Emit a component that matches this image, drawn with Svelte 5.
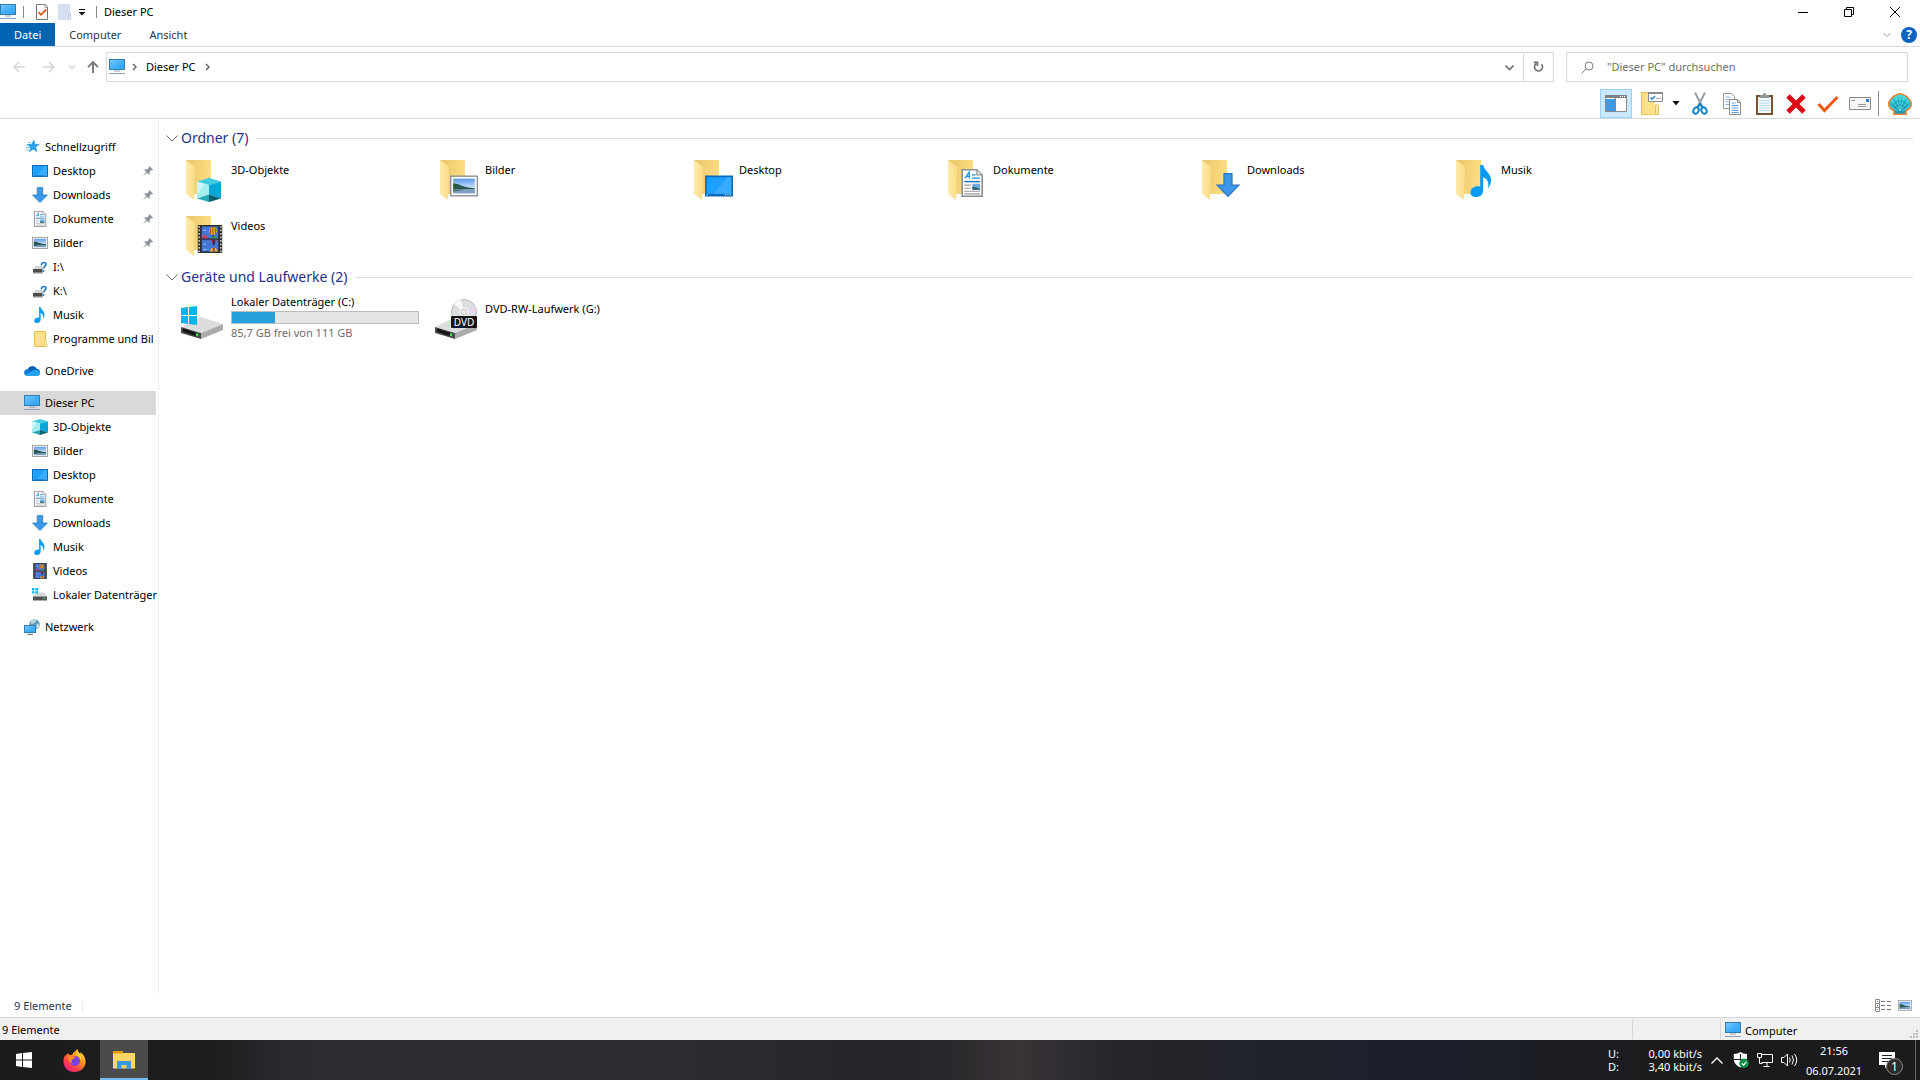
<script lang="ts">
	type Entry = { label: string; icon: string; level: number; pinned?: boolean; gap?: boolean };

	const tree: Entry[] = [
		{ label: 'Schnellzugriff', icon: 'star', level: 0 },
		{ label: 'Desktop', icon: 'desktop', level: 1, pinned: true },
		{ label: 'Downloads', icon: 'download', level: 1, pinned: true },
		{ label: 'Dokumente', icon: 'document', level: 1, pinned: true },
		{ label: 'Bilder', icon: 'picture', level: 1, pinned: true },
		{ label: 'I:\\', icon: 'unknown', level: 1 },
		{ label: 'K:\\', icon: 'unknown', level: 1 },
		{ label: 'Musik', icon: 'music', level: 1 },
		{ label: 'Programme und Bil', icon: 'folder', level: 1 },
		{ label: 'OneDrive', icon: 'cloud', level: 0, gap: true },
		{ label: 'Dieser PC', icon: 'pc', level: 0, gap: true },
		{ label: '3D-Objekte', icon: 'cube', level: 1 },
		{ label: 'Bilder', icon: 'picture', level: 1 },
		{ label: 'Desktop', icon: 'desktop', level: 1 },
		{ label: 'Dokumente', icon: 'document', level: 1 },
		{ label: 'Downloads', icon: 'download', level: 1 },
		{ label: 'Musik', icon: 'music', level: 1 },
		{ label: 'Videos', icon: 'video', level: 1 },
		{ label: 'Lokaler Datenträger', icon: 'drive', level: 1 },
		{ label: 'Netzwerk', icon: 'network', level: 0, gap: true }
	];

	// place = position and scale of the glyph in front of the folder
	const folders = [
		{ label: '3D-Objekte', icon: 'cube', place: 'translate(18 25) scale(1.5)' },
		{ label: 'Bilder', icon: 'picture', place: 'translate(17 19) scale(1.75)' },
		{ label: 'Desktop', icon: 'desktop', place: 'translate(18 19) scale(1.75)' },
		{ label: 'Dokumente', icon: 'document', place: 'translate(17 16) scale(1.75)' },
		{ label: 'Downloads', icon: 'download', place: 'translate(21 20) scale(1.5)' },
		{ label: 'Musik', icon: 'music', place: 'translate(17 12) scale(2)' },
		{ label: 'Videos', icon: 'video', place: 'translate(17 16) scale(1.75)' }
	];

	const usedPercent = 23;

	let selected = $state(10);
	let search = $state('');
	let foldersOpen = $state(true);
	let drivesOpen = $state(true);
</script>

{#snippet glyph(name: string)}
	{#if name === 'pc'}
		<rect x="0.5" y="0.5" width="15" height="10" fill="url(#screen)" stroke="#2f7fae" />
		<path d="M5 12h6" stroke="#8ea3b0" />
		<path d="M0 14.5h16" stroke="#8b9fb8" />
	{:else if name === 'desktop'}
		<rect x="0.5" y="2.5" width="15" height="11" fill="#1e9ffc" stroke="#0d6cb5" />
		<path d="M5 12.5 13 3h2v9.5z" fill="#38acff" />
		<path d="M1 13h14" stroke="#0d6cb5" />
		<path d="M1 13h.6M11.4 13h.6M12.8 13h.6M14.2 13h.6" stroke="#fff" stroke-width="0.6" />
	{:else if name === 'download'}
		<path d="M5.3 0.4h5.4v7.6h4.7L8 15.6 0.6 8h4.7z" fill="#3b97e8" stroke="#2471b9" stroke-width="0.7" />
	{:else if name === 'document'}
		<path d="M2.4 0.4h8.4l3 3v12.2H2.4z" fill="#fff" stroke="#8a8f93" stroke-width="0.9" />
		<path d="M10.8 0.4v3h3" fill="#e6e9eb" stroke="#8a8f93" stroke-width="0.7" />
		<path d="m4 5.4 2.4-3.6.2 3.6M5 4.2h1.6M8 3.4h2M8 5.2h4.4" fill="none" stroke="#1a8fd6" stroke-width="0.7" />
		<path d="M3.6 7.2h9" stroke="#1a6fb0" stroke-width="0.8" />
		<path d="M3.6 9.2h3.8M3.6 11h3.8M3.6 12.7h9M3.6 14.2h9" stroke="#9b9b9b" stroke-width="0.6" />
		<rect x="8.2" y="8.4" width="4.4" height="3.4" fill="#6ea8de" />
		<path d="M8.2 10.2q2 .2 4.4 1.2v.4H8.2z" fill="#295f62" />
	{:else if name === 'picture'}
		<rect x="0.4" y="2.4" width="15.2" height="11.2" fill="#fff" stroke="#8c9196" stroke-width="0.8" />
		<rect x="1.8" y="3.8" width="12.4" height="8.4" fill="url(#sky)" />
		<path d="M1.8 6.4q3 .2 5.6 1.7 3 .7 6.8 1.2v.7H1.8z" fill="#28594f" />
		<path d="M1.8 10h12.4v2.2H1.8z" fill="#7f9fc0" />
		<path d="M1.8 10h7l-7 1.3z" fill="#44727a" />
	{:else if name === 'music'}
		<path
			d="M7.1 0h1.5c.4 2.8 3.9 4 3.9 7.5 0 1.6-.6 3.2-1.5 4.2.7-3.2-.4-4.8-2.4-5.6v6.6c0 1.9-1.4 3.3-3.5 3.3C3.4 16 2.2 15.1 2.2 13.7c0-1.800 1.900-3.200 4-3.100.3 0 .6 0 .9.1z"
			fill="#069cf6"
		/>
	{:else if name === 'video'}
		<path d="M1 0h14v16H1z" fill="#2e2e30" />
		<path d="M1.8.6v15M14.200.6v15" stroke="#dcdcdc" stroke-width="0.800" stroke-dasharray="1 1" />
		<path d="M3.300.8h9.400v6.800H3.300zM3.300 8.400h9.400v6.800H3.300z" fill="#4476d6" />
		<path d="M3.300 6.600l1.600-1 2 1.100v.9H3.300z" fill="#c8406a" />
		<path d="M8 7.600 10.600 6l2.100 1.600z" fill="#2fa35a" />
		<ellipse cx="9.700" cy="3.400" rx="2.200" ry="2.200" fill="#e8ab22" />
		<path d="M9.700 1.200v4.400M8.300 2v3M11.100 2v3" stroke="#8d3a22" stroke-width="0.500" />
		<path d="M9.300 6h.9v.8h-.9z" fill="#3a2a20" />
		<path d="M8.200 8.400h4l-1.400 2.500h-1.200z" fill="#c93434" />
		<path d="M9.500 8.400h1.200v3H9.500z" fill="#2b2a60" />
		<path d="M8 15.200q.1-2.200 2.100-2.200t2.300 2.200z" fill="#ecb824" />
		<path d="M9.600 13.100h1.100v2.100H9.600z" fill="#a83c2a" />
		<path d="M4.200 3h1.600M4.200 11h1.500M4.200 14h2" stroke="#9ec0fb" stroke-width="0.600" />
	{:else if name === 'cube'}
		<path d="M8 0 16 2.400 8 4.600 0 2.400z" fill="#3ccbe0" />
		<path d="M0 2.400 8 4.600V11L0 13.600z" fill="#a6edf0" />
		<path d="M16 2.400 8 4.600V11l8 2.600z" fill="#0aa6d8" />
		<path d="M0 13.600 8 11v5z" fill="#25a9b6" />
		<path d="M16 13.600 8 11v5z" fill="#05606f" />
		<path d="M0 2.400 5 3.800 0 11z" fill="#cdf7f6" />
	{:else if name === 'star'}
		<path d="m9.800 1.200 1.200 4 4.200.2-3.600 2.600 1.200 4.600-3.700-2.500-3.600 2.600L6.700 8.300 3.400 5.600l4.400-.3z" fill="#2aa5ee" stroke="#1886cc" stroke-width="0.600" />
		<path d="M4 3.600h2.700M2.100 6h3M2.300 8.500h3.300M2 11h2.800" stroke="#64bdf0" />
	{:else if name === 'unknown'}
		<path d="m1.500 10 2-3h7l1 3z" fill="#d2d4d6" />
		<path d="M1 10h9.500v3.700H1z" fill="#4a4d50" />
		<path d="M1 14h9.500" stroke="#929292" />
		<path d="M9.400 6.200c0-3.600 4.900-3.400 4.600-.7-.3 1.900-2.500 1.900-2.500 4.100M11.500 11.200v1.800" fill="none" stroke="#2878bc" stroke-width="1.700" />
	{:else if name === 'folder'}
		<path d="M2.500.5h11v10.600l1 .9v3.500h-12z" fill="#ffe08a" stroke="#e6bf51" />
		<path d="M12 15.500v-3.800l1.200-1 1.300 1.200v3.600z" fill="#fff0b2" stroke="#e6bf51" stroke-width="0.800" />
	{:else if name === 'cloud'}
		<path d="M3.200 12.700A3.200 3.200 0 0 1 3.600 6.300 5.200 5.200 0 0 1 12.700 5.800 3.500 3.500 0 0 1 13.500 12.700z" fill="#0f78d4" />
		<path d="M4 5.900a5 5 0 0 1 8.800 0L7.500 9.200z" fill="#0b62b5" />
		<path d="M1.200 11.800 9.300 7.300q4.700-1.200 6.200 1.100c1.200 2.100 0 4.500-2.300 4.500H3.800q-1.800 0-2.600-1.100z" fill="#24a2ec" />
	{:else if name === 'drive'}
		<path d="m1 9.500 3-4h8l3 4z" fill="#d5d7d9" />
		<path d="M1 9.500h14V13H1z" fill="#505355" />
		<path d="M1 13.500h14" stroke="#999" stroke-width="0.800" />
		<path d="M11.500 11.300H13" stroke="#4ce34b" stroke-width="1.300" />
		<path d="M0 1h2.400v2.400H0zM3.300 1h2.800v2.400H3.300zM0 4.200h2.400v2.300H0zM3.300 4.200h2.800v2.300H3.300z" fill="#10b7ee" />
	{:else if name === 'network'}
		<circle cx="10.500" cy="5.500" r="5.300" fill="#6699b5" />
		<path d="M7 2.300q3.200-2.600 5.300-1.900-.4 3.900-5.200 4.600zM13 4.500q2 .7 2.600 1.400-.3 2.800-2.600 4-1.600-2.600 0-5.400z" fill="#c1dce8" />
		<rect x="0.500" y="6.500" width="11" height="7" fill="url(#screen)" stroke="#2f7fae" />
		<path d="M3 15.500h6M6 14v1" stroke="#75899a" />
	{:else if name === 'doccheck'}
		<path d="M2.500.5h9l2 2v13h-11z" fill="#fff" stroke="#777" />
		<path d="M11 .5v3h2.500" fill="none" stroke="#999" />
		<path d="m4.500 8.200 2.500 2.600 5.200-5.300" fill="none" stroke="#e65418" stroke-width="1.800" />
	{/if}
{/snippet}

{#snippet small(name: string)}
	<svg class="small" viewBox="0 0 16 16" aria-hidden="true">{@render glyph(name)}</svg>
{/snippet}

{#snippet driveBody()}
	<path d="M2 35 22 25l22 7-22 9z" fill="#dcddde" />
	<path d="m2 35 20 6v6L2 41z" fill="#4a4b4c" />
	<path d="M22 41 44 32v6l-22 9z" fill="#a9abad" />
	<path d="m4 38 13 4.500" stroke="#141414" stroke-width="3" />
	<path d="M18 41.500v2.500" stroke="#43e64b" stroke-width="2" />
{/snippet}

<svg class="defs" aria-hidden="true">
	<defs>
		<linearGradient id="screen" x1="0" y1="0" x2="1" y2="1">
			<stop offset="0" stop-color="#7fcaff" />
			<stop offset="0.5" stop-color="#46b1fa" />
			<stop offset="1" stop-color="#2ba2f5" />
		</linearGradient>
		<linearGradient id="sky" x1="0" y1="0" x2="0" y2="1">
			<stop offset="0" stop-color="#5b97ee" />
			<stop offset="0.7" stop-color="#d9ebfa" />
		</linearGradient>
		<linearGradient id="folderBack" x1="0" y1="0" x2="1" y2="0.3">
			<stop offset="0" stop-color="#e8c468" />
			<stop offset="1" stop-color="#fddd83" />
		</linearGradient>
		<linearGradient id="folderFlap" x1="0" y1="0" x2="1" y2="0">
			<stop offset="0" stop-color="#ffeaa8" />
			<stop offset="1" stop-color="#fbdc88" />
		</linearGradient>
		<linearGradient id="fox" x1="1" y1="0" x2="0.2" y2="1">
			<stop offset="0" stop-color="#fff14b" />
			<stop offset="0.4" stop-color="#ff9a1f" />
			<stop offset="0.75" stop-color="#ff3d4b" />
			<stop offset="1" stop-color="#ec1d8a" />
		</linearGradient>
		<radialGradient id="shell" cx="0.5" cy="0.8" r="0.8">
			<stop offset="0" stop-color="#1488ae" />
			<stop offset="0.5" stop-color="#23b4cb" />
			<stop offset="1" stop-color="#4fe3da" />
		</radialGradient>
	</defs>
</svg>

<div class="screen">
	<header>
		<div class="titlebar">
			{@render small('pc')}
			<span class="bar"></span>
			<button class="quick" aria-label="Eigenschaften">{@render small('doccheck')}</button>
			<button class="quick" aria-label="Neuer Ordner">
				<svg class="small" viewBox="0 0 16 16"><path d="M2 0h12v9h1v7H2z" fill="#d5e1f2" /><path d="M12.5 15.5v-6h2v6z" fill="#e1ebf8" stroke="#bfcfe6" /></svg>
			</button>
			<button class="quick narrow" aria-label="Symbolleiste anpassen">
				<svg width="8" height="8" viewBox="0 0 8 8"><path d="M1 1.500h6" stroke="#111" /><path d="M.5 4h7L4 7.500z" fill="#111" /></svg>
			</button>
			<span class="bar"></span>
			<h1>Dieser PC</h1>
			<div class="window-controls">
				<button aria-label="Minimieren"><svg width="10" height="10" viewBox="0 0 10 10"><path d="M0 5.500h10" /></svg></button>
				<button aria-label="Verkleinern"><svg width="10" height="10" viewBox="0 0 10 10"><path d="M.5 2.500h7v7h-7zM2.500 2.500v-2h7v7h-2" /></svg></button>
				<button aria-label="Schließen"><svg width="10" height="10" viewBox="0 0 10 10"><path d="m0 0 10 10M10 0 0 10" /></svg></button>
			</div>
		</div>

		<nav class="tabs">
			<button class="file">Datei</button>
			<button>Computer</button>
			<button>Ansicht</button>
			<span class="grow"></span>
			<button class="expand" aria-label="Menüband erweitern"><svg width="8" height="6" viewBox="0 0 8 6"><path d="m.5 1 3.500 3.500L7.500 1" fill="none" stroke="#999" /></svg></button>
			<button class="help" aria-label="Hilfe">?</button>
		</nav>

		<div class="address-row">
			<div class="history">
				<button disabled aria-label="Zurück"><svg width="12" height="12" viewBox="0 0 12 12"><path d="M12 6H1M6 1 1 6l5 5" fill="none" stroke="#d5d5d5" stroke-width="1.500" /></svg></button>
				<button disabled aria-label="Vorwärts"><svg width="12" height="12" viewBox="0 0 12 12"><path d="M0 6h11M6 1l5 5-5 5" fill="none" stroke="#d5d5d5" stroke-width="1.500" /></svg></button>
				<button class="recent" disabled aria-label="Letzte Orte"><svg width="6" height="6" viewBox="0 0 6 6"><path d="m0 1.500 3 3 3-3" fill="none" stroke="#ccc" stroke-width="1.200" /></svg></button>
				<button class="up" aria-label="Nach oben"><svg width="12" height="12" viewBox="0 0 12 12"><path d="M6 12V1M1 6.200 6 1l5 5.200" fill="none" stroke="#777" stroke-width="1.900" /></svg></button>
			</div>
			<div class="address">
				{@render small('pc')}
				<svg class="crumb" viewBox="0 0 5 8"><path d="M1 1l3 3-3 3" /></svg>
				<a href="#pc">Dieser PC</a>
				<svg class="crumb" viewBox="0 0 5 8"><path d="M1 1l3 3-3 3" /></svg>
				<span class="grow"></span>
				<button class="history-drop" aria-label="Vorherige Orte"><svg width="9" height="7" viewBox="0 0 9 7"><path d="m.5 1.500 4 4 4-4" fill="none" stroke="#707070" stroke-width="1.700" /></svg></button>
				<button class="refresh" aria-label="Aktualisieren"><svg width="11" height="12" viewBox="0 0 11 12"><path d="M8.500 3.300A4 4 0 1 1 3.300 2.600M0.800 1.400h3.700v3.600" fill="none" stroke="#707070" stroke-width="1.600" /></svg></button>
			</div>
			<label class="search">
				<svg width="13" height="13" viewBox="0 0 13 13" aria-hidden="true"><circle cx="8" cy="5" r="4" fill="none" stroke="#87797f" /><path d="M5 8 .5 12.500" stroke="#87797f" /></svg>
				<input type="text" bind:value={search} placeholder={'"Dieser PC" durchsuchen'} aria-label="Suchen" />
			</label>
		</div>

		<div class="toolbar">
			<button class="active" aria-label="Navigationsbereich">
				<svg width="22" height="17" viewBox="0 0 22 17"><path d="M.5.500h21v16H.5z" fill="#fff" stroke="#8a8a8a" /><path d="M0 0h22v3H0z" fill="#7e8387" /><path d="M15 1.500h1M17 1.500h1M19 1.500h1" stroke="#fff" /><path d="M1 4h9v12H1z" fill="#3c9ae8" /><path d="M10.500 3v13" stroke="#8a8a8a" /></svg>
			</button>
			<button class="layout" aria-label="Layout">
				<svg width="22" height="23" viewBox="0 0 22 23"><path d="M.5.500h13v22H.5z" fill="#ffe18b" stroke="#e5bf54" /><path d="M8 9h6v3.500h3.500v10H8z" fill="#ffe18b" /><path d="M14.500 22.500V14l1.500-1.500 1.500 1.500v8.500z" fill="#ffe9a5" stroke="#e5bf54" /><path d="M7.500.500h14v9h-14z" fill="#fff" stroke="#858a8e" /><path d="M7 1h15" stroke="#858a8e" stroke-width="2" /><path d="m9.500 5.500 1.500 1.700 3-3.200" fill="none" stroke="#2180c8" stroke-width="1.300" /><path d="M15 6.500h5" stroke="#aaa" /></svg>
			</button>
			<button class="drop" aria-label="Layoutoptionen"><svg width="8" height="5" viewBox="0 0 8 5"><path d="M.5 0h7L4 4.500z" fill="#111" /></svg></button>
			<button aria-label="Ausschneiden">
				<svg width="16" height="23" viewBox="0 0 16 23"><path d="M3 .5 10.500 15M13 .5 5.500 15" stroke="#9aa1a7" stroke-width="2" /><ellipse cx="4" cy="18.500" rx="2.500" ry="3.300" transform="rotate(25 4 18.500)" fill="none" stroke="#1183c6" stroke-width="2" /><ellipse cx="12" cy="18.500" rx="2.500" ry="3.300" transform="rotate(-25 12 18.500)" fill="none" stroke="#1183c6" stroke-width="2" /><path d="m5.500 15.500 2.500-3.500 2.500 3.500" fill="none" stroke="#1183c6" stroke-width="2" /></svg>
			</button>
			<button aria-label="Kopieren">
				<svg width="18" height="22" viewBox="0 0 18 22"><path d="M.5.500h8l3 3v12H.5z" fill="#fff" stroke="#8f969c" /><path d="M2.500 4h5M2.500 6.500h7M2.500 9h7M2.500 11.500h7" stroke="#8ab9e8" /><path d="M6.500 6.500h8l3 3v12h-11z" fill="#fff" stroke="#858c92" /><path d="M14.500 6.500v3h3" fill="none" stroke="#858c92" /><path d="M8.500 10h4M8.500 12.500h7M8.500 15h7M8.500 17.500h7M8.500 19.500h7" stroke="#5c9ee0" /></svg>
			</button>
			<button aria-label="Einfügen">
				<svg width="17" height="22" viewBox="0 0 17 22"><path d="M1 3h15v18H1z" fill="#f5fbff" stroke="#775334" stroke-width="2" /><path d="M3 7.500h11M3 10h11M3 12.500h11M3 15h11M3 17.500h11" stroke="#b5d8ee" /><path d="M4 2h3l.5-2h2L10 2h3v3H4z" fill="#8c979b" /></svg>
			</button>
			<button aria-label="Löschen"><svg width="20" height="20" viewBox="0 0 20 20"><path d="m2 2 16 16M18 2 2 18" stroke="#db0a17" stroke-width="5" /></svg></button>
			<button aria-label="Eigenschaften"><svg width="22" height="18" viewBox="0 0 22 18"><path d="m1.500 9 6 6.500L20.500 2" fill="none" stroke="#eb5a14" stroke-width="3" /></svg></button>
			<button aria-label="E-Mail"><svg width="22" height="13" viewBox="0 0 22 13"><path d="M.5.500h21v12H.5z" fill="#f7f7f7" stroke="#8b8b8b" /><path d="M2 3.500h4M9 7.500h8M9 9.500h8" stroke="#999" /><path d="M17 2h3v3h-3z" fill="#2484da" /></svg></button>
			<span class="sep"></span>
			<button aria-label="Classic Shell">
				<svg width="24" height="22" viewBox="0 0 24 22"><path d="M6 17.500Q1 15.500.8 11.500.6 7.500 3.600 5.500 5 2.800 8 2.200 9.800.7 12 .8q2.200-.1 4 1.400 3 .6 4.400 3.300 3 2 2.800 6Q23 15.500 18 17.500v3.700H6z" fill="url(#shell)" stroke="#ee7d2a" stroke-width="1.500" /><path d="M12 18 3.200 7M12 18 7.500 3M12 18V1.500M12 18l4.500-15M12 18l8.800-11M10 18l-8-4.500M14 18l8-4.500" fill="none" stroke="#6deae3" stroke-width="0.700" /><path d="M7 15a5.500 5.500 0 0 1 10 0M4.500 12.500a8.500 8.500 0 0 1 15 0" fill="none" stroke="#1890b0" stroke-width="0.700" /></svg>
			</button>
		</div>
	</header>

	<div class="body">
		<aside>
			{#each tree as entry, i}
				<button
					class="entry"
					class:child={entry.level === 1}
					class:gap={entry.gap}
					class:selected={selected === i}
					onclick={() => (selected = i)}
				>
					{@render small(entry.icon)}
					<span class="entry-label">{entry.label}</span>
					{#if entry.pinned}
						<svg class="pin" viewBox="0 0 10 10" aria-hidden="true"><path d="M6.500 0 10 3.500l-1 .8-.7-.2L6.500 6l.3 2-.8.800L1.200 4l.8-.8 2 .3L5.900 1.700l-.2-.8zM3 6 0 10l4-3z" fill="#8a959e" /></svg>
					{/if}
				</button>
			{/each}
		</aside>

		<main>
			<section>
				<button class="group" onclick={() => (foldersOpen = !foldersOpen)}>
					<svg width="12" height="7" viewBox="0 0 12 7"><path d="m.5.500 5.500 5.500L11.500.500" fill="none" stroke="#6d6d6d" /></svg>
					<span>Ordner (7)</span>
				</button>
				{#if foldersOpen}
					<div class="tiles">
						{#each folders as folder}
							<div class="tile">
								<svg class="large" viewBox="0 0 48 48" aria-hidden="true">
									<path d="M7 7h25v34H13z" fill="url(#folderBack)" />
									<path d="m7 7 9 7-1 33-8-6z" fill="url(#folderFlap)" />
									<g transform={folder.place}>{@render glyph(folder.icon)}</g>
								</svg>
								<span class="name">{folder.label}</span>
							</div>
						{/each}
					</div>
				{/if}
			</section>

			<section>
				<button class="group" onclick={() => (drivesOpen = !drivesOpen)}>
					<svg width="12" height="7" viewBox="0 0 12 7"><path d="m.5.500 5.500 5.500L11.500.500" fill="none" stroke="#6d6d6d" /></svg>
					<span>Geräte und Laufwerke (2)</span>
				</button>
				{#if drivesOpen}
					<div class="tiles">
						<div class="tile">
							<svg class="large" viewBox="0 0 48 48" aria-hidden="true">
								{@render driveBody()}
								<path d="m2 16 7-1v8H2zM10 15l8-1v9h-8zM2 24h7v8l-7-1zM10 24h8v9l-8-1z" fill="#00b5ef" />
							</svg>
							<div class="drive">
								<span>Lokaler Datenträger (C:)</span>
								<div class="meter"><div class="fill" style="width: {usedPercent}%"></div></div>
								<span class="free">85,7 GB frei von 111 GB</span>
							</div>
						</div>
						<div class="tile">
							<svg class="large" viewBox="0 0 48 48" aria-hidden="true">
								{@render driveBody()}
								<circle cx="31" cy="20" r="12.500" fill="#dcdedf" stroke="#b7bbbd" />
								<path d="M31 20 21 12a13 13 0 0 1 7-4.500z" fill="#f6f9f7" />
								<path d="m31 20 11-6a13 13 0 0 1 1 7z" fill="#e7d9ec" />
								<circle cx="31" cy="20" r="4" fill="#cfd1d2" stroke="#fff" />
								<circle cx="31" cy="20" r="1.500" fill="#fff" />
								<rect x="18" y="24" width="26" height="12" rx="1" fill="#151515" />
								<text class="dvd" x="31" y="34" text-anchor="middle">DVD</text>
							</svg>
							<span class="name">DVD-RW-Laufwerk (G:)</span>
						</div>
					</div>
				{/if}
			</section>
		</main>
	</div>

	<div class="details">
		<span class="count">9 Elemente</span>
		<span class="grow"></span>
		<button aria-label="Details"><svg width="16" height="13" viewBox="0 0 16 13"><path d="M.5.500h4v12h-4zM.5 4.500h4M.5 8.500h4" fill="none" stroke="#8b8b8b" /><path d="M2 2.500h1M2 6.500h1" stroke="#377fc4" /><path d="M2 10.500h1" stroke="#cf3a3a" /><path d="M6 2.500h4M6 6.500h4M6 10.500h4M12 2.500h4M12 6.500h4M12 10.500h4" stroke="#777" /></svg></button>
		<button aria-label="Große Symbole"><svg width="14" height="11" viewBox="0 2 16 12">{@render glyph('picture')}</svg></button>
	</div>

	<footer class="status">
		<span class="status-text">9 Elemente</span>
		<span class="status-empty"></span>
		<span class="status-zone">{@render small('pc')}Computer</span>
		<svg class="grip" viewBox="0 0 8 8" aria-hidden="true"><path d="M6 0h2v2H6zM3 3h2v2H3zM6 3h2v2H6zM0 6h2v2H0zM3 6h2v2H3zM6 6h2v2H6z" fill="#bcbcbc" /></svg>
	</footer>

	<div class="taskbar">
		<button class="start" aria-label="Start"><svg width="16" height="16" viewBox="0 0 16 16"><path d="m0 2 6-1v6.500H0zM7 1l9-1v7.500H7zM0 8.500h6V15l-6-1zM7 8.500h9V16l-9-1z" fill="#fff" /></svg></button>
		<button class="app" aria-label="Firefox">
			<svg width="23" height="23" viewBox="0 0 23 23"><path d="M14.500 0c.5 2.500 1.500 3.500 2.800 5 .2-1 .1-1.500 0-2 4.200 3.300 5.700 7 5.200 11-.8 5.300-5.300 9-11 9C5 23 .3 18.400.5 12 .6 9 1.500 7 2.600 5.500l.3 1.800c.5-1.700 1.200-2.600 2.300-3.400l.6 2.200c1.200-.4 2-.3 3 .2C10 3.500 12 2.500 14.500 0z" fill="url(#fox)" /><circle cx="12" cy="12" r="5" fill="#7a3fe0" /><path d="M5.800 6.100c3 .2 4.600 1.800 6.700 1.800-.5 1.600-2.500 1.300-3.700 2.800-.8 1.300-.1 2.600.8 3.600-2.700-.4-4.300-2.500-4.300-4.800z" fill="#ff8c24" /><path d="M13 6c2.500.3 4.500 2.500 4.500 5.500 1.600-3 .5-6-1.500-7.500z" fill="#ffd23f" /></svg>
		</button>
		<button class="app running" aria-label="Explorer">
			<svg width="22" height="18" viewBox="0 0 22 18"><path d="M0 0h9l1.500 2H22v15.500H0z" fill="#ffd667" /><path d="M0 0h9l1.500 2.500H0z" fill="#e29b06" /><path d="M4 10h14v8h-4.500v-4h-5v4H4z" fill="#3a98dd" /></svg>
		</button>
		<span class="grow"></span>
		<dl class="traffic">
			<dt>U:</dt>
			<dd>0,00 kbit/s</dd>
			<dt>D:</dt>
			<dd>3,40 kbit/s</dd>
		</dl>
		<div class="tray">
			<button aria-label="Ausgeblendete Symbole"><svg width="12" height="7" viewBox="0 0 12 7"><path d="M.5 6.500 6 1l5.500 5.500" fill="none" stroke="#fff" stroke-width="1.300" /></svg></button>
			<button aria-label="Sicherheit"><svg width="16" height="16" viewBox="0 0 16 16"><path d="M7.500 0Q10 2 14 2v5q-.5 6-6.500 8.500Q1 13 .8 7V2q4 0 6.700-2z" fill="#fff" /><path d="M7.500 2v12M1 7.500h13" stroke="#1c1c1c" /><circle cx="11" cy="11.300" r="4.700" fill="#11934a" /><path d="m8.700 11.300 1.800 1.800 3-3.300" fill="none" stroke="#fff" stroke-width="1.200" /></svg></button>
			<button aria-label="Netzwerk"><svg width="16" height="14" viewBox="0 0 16 14"><path d="M4.500 1.500h11v8h-11M10 9.500v4M6.500 13.500h6M.5.500h4v4h-4zM2.500 4.500v6h3" fill="none" stroke="#fff" /></svg></button>
			<button aria-label="Lautstärke"><svg width="17" height="14" viewBox="0 0 17 14"><path d="M.5 4.500h2.500l3.500-3.500v12L3 9.500H.5zM8.500 4.500q1.500 2.500 0 5M11 2.500q3 4.500 0 9M13.500 1q4.500 6 0 12" fill="none" stroke="#fff" /></svg></button>
		</div>
		<div class="clock"><time>21:56</time><span>06.07.2021</span></div>
		<button class="notes" aria-label="Benachrichtigungen">
			<svg width="16" height="16" viewBox="0 0 16 16"><path d="M0 0h16v13H9l-3 3v-3H0z" fill="#fff" /><path d="M3 3.500h10M3 6.500h10M3 9.500h7" stroke="#222" /></svg>
			<span class="badge">1</span>
		</button>
		<button class="show-desktop" aria-label="Desktop anzeigen"></button>
	</div>
</div>

<style>
	:global(body) {
		margin: 0;
	}

	.screen {
		display: flex;
		flex-direction: column;
		min-height: 100vh;
		background: #fff;
		color: #000;
		font: 11px/16px 'Noto Sans', 'Open Sans', sans-serif;
	}

	button {
		display: flex;
		align-items: center;
		justify-content: center;
		margin: 0;
		padding: 0;
		border: 0;
		background: none;
		color: inherit;
		font: inherit;
	}

	svg {
		display: block;
		flex: none;
	}

	.defs {
		position: absolute;
		width: 0;
		height: 0;
	}

	.small {
		width: 16px;
		height: 16px;
	}

	.grow {
		flex: 1;
	}

	/* Title bar */
	.titlebar {
		display: flex;
		align-items: center;
		height: 23px;
	}

	.bar {
		width: 1px;
		height: 12px;
		margin: 0 7px;
		background: #8a8a8a;
	}

	.quick {
		width: 22px;
		height: 22px;
	}

	.quick.narrow {
		width: 14px;
	}

	.titlebar h1 {
		flex: 1;
		margin: 0;
		font-size: 11px;
		font-weight: 400;
	}

	.window-controls {
		display: flex;
		padding-right: 2px;
	}

	.window-controls button {
		width: 46px;
		height: 20px;
	}

	.window-controls path {
		fill: none;
		stroke: #000;
	}

	/* Tabs */
	.tabs {
		display: flex;
		align-items: center;
		height: 23px;
		padding-right: 3px;
		border-bottom: 1px solid #dadbdc;
	}

	.tabs button {
		height: 23px;
		padding: 0 14px;
		color: #333;
	}

	.tabs .file {
		background: #0063b1;
		color: #fff;
	}

	.tabs .expand {
		width: 28px;
		padding: 0;
	}

	.tabs .help {
		width: 16px;
		height: 16px;
		padding: 0;
		border-radius: 50%;
		background: #0a63c2;
		color: #fff;
		font-size: 12px;
		font-weight: 700;
	}

	/* Address */
	.address-row {
		display: flex;
		padding: 5px 12px 0 4px;
	}

	.history {
		display: flex;
		width: 102px;
	}

	.history button {
		width: 30px;
	}

	.history .recent {
		width: 16px;
	}

	.history .up {
		width: 26px;
	}

	.address,
	.search {
		display: flex;
		align-items: center;
		box-sizing: border-box;
		height: 30px;
		border: 1px solid #d9d9d9;
	}

	.address {
		flex: 1;
		gap: 7px;
		padding-left: 2px;
	}

	.address a {
		margin: 0 2px;
		color: #000;
		text-decoration: none;
	}

	.crumb {
		width: 5px;
		height: 8px;
	}

	.crumb path {
		fill: none;
		stroke: #666;
		stroke-width: 1.5;
	}

	.refresh {
		width: 30px;
		height: 28px;
		border-left: 1px solid #d9d9d9;
	}

	.history-drop {
		width: 14px;
	}

	.search {
		width: 342px;
		margin-left: 12px;
		padding-left: 14px;
		gap: 13px;
	}

	.search input {
		flex: 1;
		min-width: 0;
		padding: 0;
		border: 0;
		outline: 0;
		background: none;
		font: inherit;
	}

	.search input::placeholder {
		color: #6d6d6d;
		opacity: 1;
	}

	/* Toolbar */
	.toolbar {
		display: flex;
		align-items: center;
		justify-content: flex-end;
		padding: 7px 4px 0 0;
		border-bottom: 1px solid #dadbdc;
	}

	.toolbar button {
		width: 32px;
		height: 29px;
		box-sizing: border-box;
	}

	.toolbar .active {
		border: 1px solid #99d1ff;
		background: #cce8ff;
	}

	.toolbar .layout {
		margin-left: 4px;
	}

	.toolbar .drop {
		width: 16px;
	}

	.sep {
		width: 1px;
		height: 25px;
		margin: 0 5px 0 2px;
		background: #8a8a8a;
	}

	/* Body */
	.body {
		display: flex;
		flex: 1;
	}

	aside {
		width: 156px;
		padding: 16px 2px 0 0;
		border-right: 1px solid #f1f1f1;
	}

	.entry {
		justify-content: flex-start;
		gap: 5px;
		width: 100%;
		height: 24px;
		padding-left: 24px;
		text-align: left;
	}

	.entry.child {
		padding-left: 32px;
	}

	.entry.gap {
		margin-top: 8px;
	}

	.entry.selected {
		background: #d9d9d9;
	}

	.entry-label {
		flex: 1;
		white-space: nowrap;
	}

	.pin {
		width: 10px;
		height: 10px;
		margin-right: 3px;
	}

	main {
		flex: 1;
		padding: 7px 7px 0;
	}

	.group {
		width: 100%;
		height: 24px;
		gap: 3px;
		color: #1e3287;
		font-size: 14px;
		line-height: 24px;
	}

	.group::after {
		flex: 1;
		height: 1px;
		margin-left: 5px;
		background: #e2e2e2;
		content: '';
	}

	.tiles {
		display: grid;
		grid-template-columns: repeat(auto-fill, 254px);
		grid-auto-rows: 56px;
		padding: 3px 0 0 13px;
	}

	.tile {
		display: flex;
		gap: 4px;
	}

	.large {
		width: 48px;
		height: 48px;
		overflow: visible;
	}

	.name {
		padding-top: 9px;
	}

	.drive {
		display: flex;
		flex-direction: column;
		gap: 1px;
		width: 188px;
		padding-top: 2px;
	}

	.meter {
		box-sizing: border-box;
		height: 13px;
		border: 1px solid #bcbcbc;
		background: #e6e6e6;
	}

	.fill {
		height: 100%;
		background: #26a0da;
	}

	.free {
		color: #6d6d6d;
	}

	.dvd {
		fill: #fff;
		font-size: 10px;
	}

	/* Details row */
	.details {
		display: flex;
		align-items: center;
		height: 23px;
		gap: 7px;
		padding: 0 8px 0 14px;
	}

	.count {
		padding-right: 10px;
		border-right: 1px solid #eee;
		color: #1e395b;
		line-height: 12px;
	}

	/* Status bar */
	.status {
		display: flex;
		height: 22px;
		border-top: 1px solid #d7d7d7;
		background: #f0f0f0;
		line-height: 23px;
	}

	.status-text {
		flex: 1;
		padding-left: 2px;
	}

	.status-empty,
	.status-zone {
		box-sizing: border-box;
		margin: 1px 0;
		border-left: 1px solid #d7d7d7;
	}

	.status-empty {
		width: 88px;
	}

	.status-zone {
		display: flex;
		align-items: center;
		gap: 4px;
		width: 190px;
		padding: 2px 0 0 4px;
	}

	.grip {
		align-self: flex-end;
		width: 8px;
		height: 8px;
		margin: 0 2px 2px 0;
	}

	/* Taskbar */
	.taskbar {
		display: flex;
		height: 40px;
		background: linear-gradient(90deg, #1c1c1c 0, #1d1d1d 11%, #2a2b31 15%, #2d2c33 26%, #2b2a31 38%, #26262b 44%, #28272b 49%, #3a3338 53%, #26272b 58%, #20222a 66%, #1b202b 74%, #1c1d21 83%, #1b1b1b 90%);
		color: #fff;
	}

	.start,
	.app {
		width: 48px;
	}

	.taskbar .app:nth-child(2) {
		width: 52px;
	}

	.running {
		box-sizing: border-box;
		padding-top: 2px;
		border-bottom: 2px solid #76b9ed;
		background: #4b4b4b;
	}

	.traffic {
		display: grid;
		grid-template-columns: auto 1fr;
		align-content: center;
		width: 94px;
		margin: 0 3px 0 0;
		line-height: 13px;
	}

	.traffic dd {
		margin: 0;
		text-align: right;
	}

	.tray {
		display: flex;
	}

	.tray button {
		width: 24px;
	}

	.clock {
		display: flex;
		flex-direction: column;
		align-items: center;
		justify-content: space-around;
		width: 66px;
		margin-right: 2px;
		line-height: 19px;
	}

	.notes {
		position: relative;
		width: 36px;
	}

	.badge {
		position: absolute;
		right: 2px;
		bottom: 5px;
		box-sizing: border-box;
		width: 17px;
		height: 17px;
		border: 1px solid #8a8a8a;
		border-radius: 50%;
		background: #2c2c2c;
		font-size: 12px;
		line-height: 15px;
	}

	.show-desktop {
		width: 5px;
		margin-left: 10px;
		border-left: 1px solid #6a6a6a;
	}
</style>
